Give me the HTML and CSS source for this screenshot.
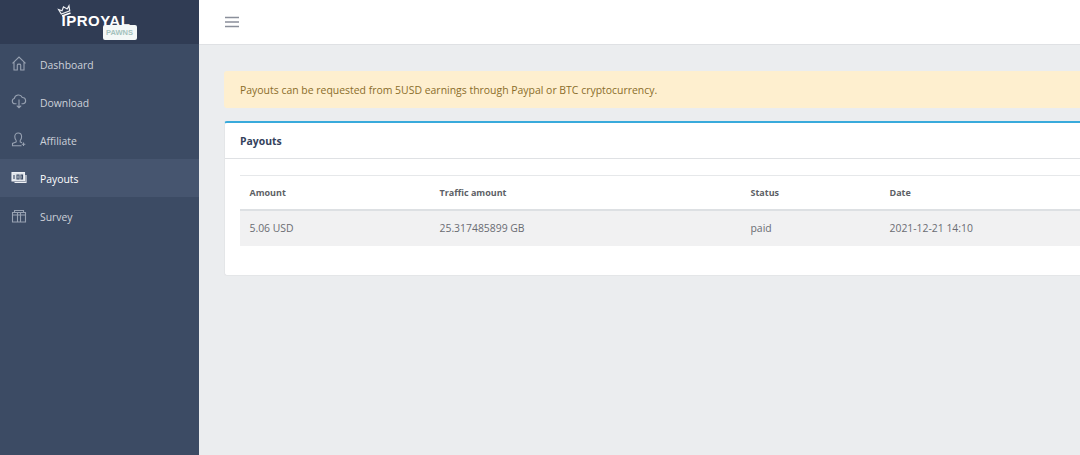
FILE: index.html
```html
<!DOCTYPE html>
<html lang="en">
<head>
<meta charset="utf-8">
<title>Payouts</title>
<link rel="stylesheet" href="styles.css">
</head>
<body>
<div class="app">
  <aside class="sidebar">
    <div class="brand">
      <div class="logo">
        <svg class="crown" viewBox="0 0 14 12" width="14" height="12"><path d="M1.500 2.500 4.300 4.800 7 1.500 9.700 4.800 12.500 2.500 11.500 7.500H2.500Z" fill="none" stroke="#e8ebef" stroke-width="1.200"/><path d="M2.500 9.800H11.500" stroke="#fff" stroke-width="1.600"/></svg>
        <span class="logo-word">IPROYAL</span>
        <span class="logo-tag">PAWNS</span>
      </div>
    </div>
    <nav class="nav">
      <a class="nav-item"><svg class="nav-icon" viewBox="0 0 16 16"><path d="M1.500 7.300 8 1 14.500 7.300M3 6V14H6.300V9C6.300 7.800 9.700 7.800 9.700 9V14H13V6"/></svg><span>Dashboard</span></a>
      <a class="nav-item"><svg class="nav-icon" viewBox="0 0 16 16"><path d="M5.500 9.800H3.800A2.700 2.700 0 0 1 3.300 4.500 4.200 4.200 0 0 1 11.300 3.500 3.200 3.200 0 0 1 12.200 9.800H10.500M8 5.500V13.800M5.800 11.600 8 13.800 10.200 11.600"/></svg><span>Download</span></a>
      <a class="nav-item"><svg class="nav-icon" viewBox="0 0 16 16"><path d="M5.200 8.500C4.300 7.500 3.800 6.200 3.800 4.700 3.800 2.500 5.200 1 7.200 1S10.600 2.500 10.600 4.700C10.600 6.200 10.100 7.500 9.200 8.500V9.900L11 10.700M5.200 8.500V9.900L1.500 11.400V13.700H10.500M12.500 10.500V14M10.800 12.300H14.300"/></svg><span>Affiliate</span></a>
      <a class="nav-item active"><svg class="nav-icon nav-icon-bright" viewBox="0 0 16 16"><path class="fill" d="M1 2.500H13.500V11H1Z"/><path d="M1 2.500H13.500V11H1ZM15 5V12.500H3.500"/><path class="dark" d="M3 5V9M6 5H8V9H6ZM10 5H11.500V9H10Z"/></svg><span>Payouts</span></a>
      <a class="nav-item"><svg class="nav-icon" viewBox="0 0 16 16"><path d="M1.500 4.500H14.500V14H1.500ZM1.500 7H14.500M6.500 4.500V14M9.500 4.500V14M3.500 4.500V2.500H12.500V4.500"/></svg><span>Survey</span></a>
    </nav>
  </aside>
  <div class="content">
    <header class="topbar">
      <svg class="burger" viewBox="0 0 14 12" width="14" height="12"><path d="M0 1.500H14M0 6H14M0 10.500H14"/></svg>
    </header>
    <main class="main">
      <div class="alert">Payouts can be requested from 5USD earnings through Paypal or BTC cryptocurrency.</div>
      <section class="card">
        <h2 class="card-header">Payouts</h2>
        <div class="card-body">
          <table class="table">
            <thead>
              <tr><th class="c1">Amount</th><th class="c2">Traffic amount</th><th class="c3">Status</th><th class="c4">Date</th></tr>
            </thead>
            <tbody>
              <tr><td>5.06 USD</td><td>25.317485899 GB</td><td>paid</td><td>2021-12-21 14:10</td></tr>
            </tbody>
          </table>
        </div>
      </section>
    </main>
  </div>
</div>
</body>
</html>
```

FILE: styles.css
```css
* { box-sizing: border-box; }
html, body { margin: 0; height: 100%; overflow: hidden; }
body { font-family: "Open Sans", "Liberation Sans", sans-serif; font-size: 10.4px; color: #4f5d73; background: #ebedef; }
.app { display: flex; height: 455px; width: 1080px; overflow: hidden; }
.sidebar { flex: 0 0 199px; background: #3c4b64; color: #d3d7de; }
.brand { height: 44px; background: #303c54; display: flex; justify-content: center; align-items: flex-start; }
.logo { position: relative; width: 84px; height: 44px; }
.crown { position: absolute; left: 0; top: 5px; transform: rotate(-20deg); }
.logo-word { position: absolute; left: 4px; top: 12px; font-family: "Liberation Sans", sans-serif; font-weight: 700; font-size: 15px; line-height: 17px; color: #fff; letter-spacing: .5px; }
.logo-tag { position: absolute; left: 45px; top: 25px; width: 34px; height: 15px; border-radius: 2px; background: #f4f8f7; color: #a4c2bd; font-family: "Liberation Sans", sans-serif; font-weight: 700; font-size: 7.500px; line-height: 15px; text-align: center; }
.nav { display: flex; flex-direction: column; padding-top: 1px; }
.nav-item { height: 38px; display: flex; align-items: center; padding-left: 11px; gap: 13px; color: #ccd1d9; }
.nav-item span { padding-top: 1px; }
.nav-item.active { background: #46556f; color: #fff; }
.nav-icon { width: 16px; height: 16px; flex: none; fill: none; stroke: #98a2b2; stroke-width: 1.100; }
.nav-icon-bright { stroke: #eef0f4; }
.nav-icon .fill { fill: #dfe4ea; stroke: none; }
.nav-icon .dark { stroke: #3c4b64; }
.content { flex: 1; min-width: 0; display: flex; flex-direction: column; }
.topbar { flex: 0 0 45px; background: #fff; border-bottom: 1px solid #dfe1e4; display: flex; align-items: center; padding-left: 26px; }
.burger { fill: none; stroke: #8a8f9a; stroke-width: 1.400; }
.main { flex: 1; padding: 26px 0 0 25px; width: 1000px; }
.alert { height: 37px; line-height: 38px; padding-left: 16px; font-size: 10.450px; background: #feefcf; color: #8a6d2a; border-radius: 3px; margin-bottom: 13px; }
.card { height: 155px; background: #fff; border: 1px solid #e4e6e8; border-top: 2px solid #39aadb; border-right: 0; border-radius: 3px 0 0 3px; }
.card-header { margin: 0; height: 36px; line-height: 37px; padding-left: 15px; font-size: 10.400px; font-weight: 700; color: #34425c; border-bottom: 1px solid #dfe1e4; }
.card-body { padding: 16px 0 0 15px; }
.table { width: 900px; border-collapse: collapse; table-layout: fixed; }
.table th, .table td { padding: 0 0 0 9.500px; text-align: left; font-size: 10.400px; }
.table th { height: 34px; font-size: 9px; font-weight: 700; color: #5d5f66; border-top: 1px solid #e6e8ea; border-bottom: 2px solid #dde0e3; }
.table td { height: 36px; background: #f1f1f2; color: #6a6c73; }
.c1 { width: 190px; }
.c2 { width: 311px; }
.c3 { width: 139px; }
```
